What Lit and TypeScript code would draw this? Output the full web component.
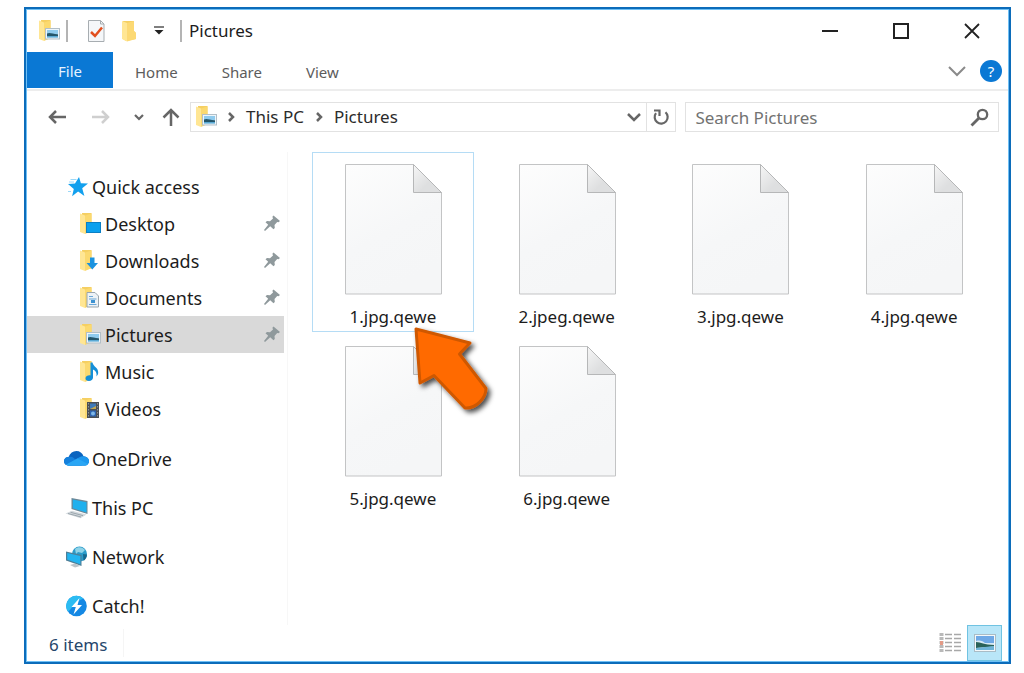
import { LitElement, html, css, svg, nothing } from "lit";
import { customElement, property, state } from "lit/decorators.js";
import { classMap } from "lit/directives/class-map.js";

const folderBase = svg`
  <path d="M3 1h9.500v18.500L5.500 21 3 19z" fill="#f5cf62"/>
  <path d="M1 1.500 6 3.500V22L1 20z" fill="#ffe694"/>
  <path d="M6 3.500 12.500 1.500V19L6 22z" fill="#fbd96f"/>`;

const picture = svg`
  <rect x="7.500" y="9.500" width="14" height="10.500" fill="#eef6fb" stroke="#b3bfc7"/>
  <rect x="9" y="11" width="11" height="4" fill="#8fcbee"/>
  <path d="M9 14.500c3-1.500 5 .5 11 .8v2H9z" fill="#24566b"/>
  <rect x="9" y="17" width="11" height="1.600" fill="#5aa9d4"/>`;

const icons: Record<string, unknown> = {
  desktop: svg`${folderBase}<rect x="7.500" y="10.500" width="14" height="10" fill="#0aa0ee" stroke="#0b7fc4"/>`,
  downloads: svg`${folderBase}<path d="M11 8.500h4.500V14H19l-5.700 6.500L7.500 14H11z" fill="#1b93e0"/>`,
  documents: svg`${folderBase}
    <path d="M8 6.500h8l3.500 3.500v11H8z" fill="#edf2f6" stroke="#9aa6ae"/>
    <path d="M10 10.500h4M10 13h7.500M10 18.500h7.500" stroke="#6aa8d8" stroke-width="1.200"/>
    <rect x="12" y="14" width="4" height="3" fill="#3d92d1"/>`,
  pictures: svg`${folderBase}${picture}`,
  music: svg`${folderBase}
    <path d="M11.500 2.500h2c.4 4 6.200 5 5.700 10.500-.2 1.700-1 2.700-1.800 3.500.8-3.500-.9-6-3.400-7v8c0 2-1.800 3.500-4 3.500s-3.500-1-3.500-2.700 2-3 4-3c.4 0 .7 0 1 .1z" fill="#148fd8"/>`,
  videos: svg`${folderBase}
    <rect x="8" y="5" width="12" height="16" fill="#4a4f55"/>
    <path d="M9.500 6v14M18.500 6v14" stroke="#8b9298" stroke-dasharray="1.500 1.500"/>
    <rect x="11" y="6.500" width="6" height="5.500" fill="#3e79b8"/>
    <path d="M11 12l6-3v3z" fill="#c4a64e"/>
    <rect x="11" y="13.500" width="6" height="6" fill="#2c63b0"/>
    <circle cx="14" cy="16.500" r="2" fill="#7db7e8"/>`,
  star: svg`<g transform="translate(1.500 0)">
    <path d="m13.500 2 1.900 6.300 7.100.2-5.800 4.700 2.200 7.800-6.300-4.400-6 4.700 1.700-7.200L2.500 9l7-.4z" fill="#12a0ee"/>
    <path d="M5 4.500h6M3.500 7h5M2.500 16.500h3" stroke="#9bd8f8"/></g>`,
  cloud: svg`
    <path d="M4.500 18.500C1.500 18.500 0 16.500 0 14.300 0 11.500 2.200 10 4.500 10 6 6 9 4 12.300 4c3.500 0 6.200 2 7.200 5.300 3 .3 5.500 2.200 5.500 5 0 2.500-2 4.200-4.500 4.200z" fill="#0b64bf"/>
    <path d="M4.500 10c2-.4 4 .2 5.500 1.200l8 7.300H4.500C1.500 18.500 0 16.500 0 14.300 0 11.500 2.200 10 4.500 10z" fill="#1580dc"/>
    <path d="M2 17.800 15 10.500c1.500-.8 3-1.300 4.500-1.200 3 .3 5.500 2.200 5.500 5 0 2.500-2 4.200-4.500 4.200h-16c-1 0-1.800-.2-2.500-.7z" fill="#1d98ee"/>
    <path d="M2 17.800 13.500 11.400 24 17c-.8 1-2 1.500-3.500 1.500h-16c-1 0-1.800-.2-2.500-.7z" fill="#2aa6f4"/>`,
  pc: svg`
    <path d="M7.500 2 23.500 5v13L7.500 13z" fill="#6d8796"/>
    <path d="M8.800 3.500 22.500 6.200v10.200L8.800 12.200z" fill="#1fb0ee"/>
    <path d="M1.500 17.500 8 14.800l14.500 3.700-6 3.800z" fill="#d3d9dd"/>
    <path d="m4 17.500 13 3.500M6.500 16.300 19 19.600" stroke="#9ba6ad"/>`,
  network: svg`
    <circle cx="15.500" cy="9" r="7.500" fill="#2b9bc9"/>
    <path d="M11 4c3-3 8-2 10 1l-3 3-4-1-2 2z" fill="#8fd3e8"/>
    <path d="m19 9 4 .5c0 3-1.500 5-3.500 6.500z" fill="#17688f"/>
    <path d="M2 6.500l15.500 3.500v11L2 15.500z" fill="#4e7f98"/>
    <path d="m3.200 8 13.200 3v8.300L3.200 14.500z" fill="#22b4f0"/>
    <path d="m6 20 5-1.500 5 2.500-5 1.500z" fill="#bcc4c9"/>`,
  bolt: svg`
    <circle cx="12.500" cy="12" r="10.300" fill="#1488e4"/>
    <path d="M12.500 1.700A10.300 10.300 0 0 0 4 17.800C8 15 10 8 19.500 4.500a10.300 10.300 0 0 0-7-2.800z" fill="#2cbcf2"/>
    <path d="M15.500 4 7.500 13h4.300L9.500 20.500 18 11h-4.500z" fill="#fff"/>`,
  folder: svg`<g transform="translate(3 0)">
    <path d="M4 2h11v10l2 2v6L7 22 4 20z" fill="#f5cf62"/>
    <path d="m3 2 5 2v18.500L3 20z" fill="#ffe694"/>
    <path d="m8 4 7-2v10l2 2v6l-9 2.500z" fill="#fcd974"/></g>`,
  check: svg`
    <path d="M4.500 1.500h12l3.500 3.500v17.500H4.500z" fill="#f5f7f9" stroke="#a7adb1"/>
    <path d="M16.500 1.500V5H20" fill="none" stroke="#a7adb1"/>
    <path d="m7 13 4 4 7-8.500" fill="none" stroke="#e2501f" stroke-width="2.500"/>`,
};

const icon = (name: string) =>
  html`<svg class="icon" viewBox="0 0 25 24" aria-hidden="true">${icons[name]}</svg>`;

const stroke = (d: string, size: number, width = 2) => html`<svg
  width=${size} height=${size} viewBox="0 0 ${size} ${size}" fill="none"
  stroke="currentColor" stroke-width=${width} aria-hidden="true"><path d=${d}></path></svg>`;

@customElement("file-tile")
class FileTile extends LitElement {
  @property() name = "";
  @property({ type: Boolean }) selected = false;

  static styles = css`
    :host { display: block; }
    .tile {
      display: flex; flex-direction: column; align-items: center; gap: 10px;
      width: 100%; height: 180px; padding: 11px 0 0; margin: 0;
      border: 1px solid transparent; background: none;
      font: 17px/24px "Noto Sans", "Open Sans", sans-serif; color: #1c1c1c;
    }
    .selected { border-color: #b5dcf5; }
    .sheet { display: block; width: 98px; height: 131px; flex: none; }
  `;

  render() {
    return html`<button class=${classMap({ tile: true, selected: this.selected })}>
      <svg class="sheet" viewBox="0 0 98 131" aria-hidden="true">
        <defs>
          <linearGradient id="paper" x1="0" y1="0" x2=".4" y2="1">
            <stop offset="0" stop-color="#fdfdfd"/><stop offset=".6" stop-color="#f6f7f8"/><stop offset="1" stop-color="#f5f6f7"/>
          </linearGradient>
          <linearGradient id="fold" x1="0" y1="0" x2="1" y2="1">
            <stop offset="0" stop-color="#f6f6f6"/><stop offset=".6" stop-color="#dedfe0"/>
          </linearGradient>
        </defs>
        <path d="M1.500.5h68L97.500 28.500V130H1.500z" fill="url(#paper)" stroke="#c3c4c5"/>
        <path d="M69.500.5 97.500 28.500h-28z" fill="url(#fold)" stroke="#b6b7b8"/>
      </svg>
      <span>${this.name}</span>
    </button>`;
  }
}

interface Place { label: string; icon: string; pinned?: boolean; child?: boolean }

const quickAccess: Place[] = [
  { label: "Quick access", icon: "star" },
  { label: "Desktop", icon: "desktop", child: true, pinned: true },
  { label: "Downloads", icon: "downloads", child: true, pinned: true },
  { label: "Documents", icon: "documents", child: true, pinned: true },
  { label: "Pictures", icon: "pictures", child: true, pinned: true },
  { label: "Music", icon: "music", child: true },
  { label: "Videos", icon: "videos", child: true },
];
const roots: Place[] = [
  { label: "OneDrive", icon: "cloud" },
  { label: "This PC", icon: "pc" },
  { label: "Network", icon: "network" },
  { label: "Catch!", icon: "bolt" },
];
const files = ["1.jpg.qewe", "2.jpeg.qewe", "3.jpg.qewe", "4.jpg.qewe", "5.jpg.qewe", "6.jpg.qewe"];

@customElement("app-root")
class AppRoot extends LitElement {
  @state() private place = "Pictures";

  static styles = css`
    :host {
      display: block; box-sizing: border-box; min-height: 100vh;
      padding: 7px 13px 9px 24px; background: #fff;
      font: 17px/24px "Noto Sans", "Open Sans", sans-serif; color: #1c1c1c;
    }
    * { box-sizing: border-box; }
    button, input { font: inherit; color: inherit; background: none; border: 0; padding: 0; margin: 0; }
    svg { display: block; flex: none; }
    .icon { width: 25px; height: 24px; }
    .window {
      display: flex; flex-direction: column; min-height: calc(100vh - 16px);
      border: 2px solid #0c6cba; box-shadow: inset 0 0 0 1px #6fc0f5; padding: 1px;
    }
    .titlebar { display: flex; align-items: center; height: 42px; padding: 0 1px 0 11px; }
    .rule { width: 2px; height: 22px; background: #b4b4b4; }
    .quick { display: flex; align-items: center; gap: 7px; margin: 0 10px 0 16px; }
    .quick:before { content: none; }
    .lead { margin-left: 3px; }
    .title { font-size: 17px; font-weight: 400; margin: 0 auto 0 7px; }
    .controls { display: flex; color: #222; }
    .controls button { display: grid; place-items: center; width: 71px; height: 42px; }
    .tabs { display: flex; align-items: stretch; height: 39px; padding-bottom: 1px; border-bottom: 2px solid #ededed; font-size: 15px; color: #5c5c5c; }
    .tab { padding: 4px 22px 0; }
    .file { width: 86px; padding: 2px 0 0; background: #0a78d4; color: #e6f3ff; }
    .tools { display: flex; align-items: center; gap: 13px; margin-left: auto; padding: 2px 6px 0 0; color: #8a8a8a; }
    .help { width: 22px; height: 22px; border-radius: 50%; background: #0a78d4; color: #fff; line-height: 22px; }
    .address { display: flex; align-items: center; gap: 9px; padding: 11px 9px 0 20px; color: #666; }
    .nav { display: flex; align-items: center; }
    .nav button { display: grid; place-items: center; height: 30px; }
    .wide { width: 20px; }
    .forward { width: 20px; margin: 0 22px 0 24px; color: #cfcfcf; }
    .recent { width: 14px; margin-right: 14px; }
    .fields { flex: 1; display: grid; grid-template-columns: 487fr 314fr; gap: 9px; }
    .box { display: flex; align-items: center; height: 30px; border: 1px solid #e2e2e2; min-width: 0; }
    .crumbs { display: flex; align-items: center; gap: 7px; flex: 1; padding: 0 4px; }
    .crumb { color: #2b2b2b; }
    .expand { margin-left: auto; }
    .refresh { display: grid; place-items: center; width: 29px; height: 28px; border-left: 1px solid #e2e2e2; }
    .search { padding: 0 9px; }
    .search input { flex: 1; min-width: 0; height: 28px; outline: 0; }
    .search input::placeholder { color: #727272; opacity: 1; }
    .main { flex: 1; display: flex; padding-top: 20px; }
    .side { flex: none; width: 261px; padding-top: 16px; border-right: 1px solid #f7f7f7; font-size: 18px; }
    .group { list-style: none; margin: 0; padding: 0 3px 0 0; }
    .roots { display: grid; gap: 12px; padding-top: 13px; }
    .place { display: flex; align-items: center; gap: 3px; height: 37px; padding: 0 3px 0 37px; color: inherit; text-decoration: none; }
    .child { padding-left: 52px; gap: 1px; }
    .current { background: #d9d9d9; }
    .pin { margin-left: auto; }
    .files {
      flex: 1; display: grid; align-content: start;
      grid-template-columns: repeat(auto-fill, minmax(160px, 1fr));
      gap: 2px 12px; padding: 0 13px 0 24px;
    }
    .cell { position: relative; }
    .pointer { position: absolute; left: 97px; top: 170px; z-index: 1; pointer-events: none; }
    .status { display: flex; align-items: center; height: 36px; padding: 0 6px 0 22px; color: #26466b; }
    .status span { padding: 4px 16px 0 0; border-right: 1px solid #f5f5f5; }
    .views { display: flex; margin-left: auto; }
    .views button { display: grid; place-items: center; width: 35px; height: 36px; }
    .views .on { background: #b9e6f8; border: 1px solid #70c3e2; }
  `;

  private renderPlace(p: Place) {
    const current = p.label === this.place;
    return html`<li><a href="#" aria-current=${current ? "page" : nothing}
      class=${classMap({ place: true, child: !!p.child, current })}
      @click=${(e: Event) => { e.preventDefault(); this.place = p.label; }}>
      ${icon(p.icon)}<span>${p.label}</span>
      ${p.pinned ? html`<svg class="pin" width="18" height="18" viewBox="0 0 18 18" aria-hidden="true">
        <path d="M10.500 .5 17 6l-1.500 1.200-1.300-.2-2.700 3 .3 3-1.300 1.300-3.300-3L2 16l-1-1 4.200-5.300-2.700-2.500L4 6l3 .2 3-2.700-.6-1.700z" fill="#8f999c"/>
      </svg>` : nothing}
    </a></li>`;
  }

  render() {
    return html`<div class="window">
      <header class="titlebar">
        ${icon("pictures")}
        <span class="rule lead"></span>
        <div class="quick">
          <button aria-label="Properties">${icon("check")}</button>
          <button aria-label="New folder">${icon("folder")}</button>
          <button aria-label="Customize Quick Access Toolbar">
            <svg width="22" height="12" viewBox="0 0 22 12" aria-hidden="true">
              <path d="M6 2h10" stroke="#555" stroke-width="1.500"/><path d="M6.500 5h9L11 9.500z" fill="#222"/>
            </svg>
          </button>
        </div>
        <span class="rule"></span>
        <h1 class="title">Pictures</h1>
        <div class="controls">
          <button aria-label="Minimize">${stroke("M1 9h16", 18)}</button>
          <button aria-label="Maximize">${stroke("M2 2h14v14H2z", 18)}</button>
          <button aria-label="Close">${stroke("M2 2l14 14M16 2 2 16", 18, 1.8)}</button>
        </div>
      </header>
      <div class="tabs">
        <button class="file">File</button>
        <button class="tab">Home</button>
        <button class="tab">Share</button>
        <button class="tab">View</button>
        <div class="tools">
          <button aria-label="Expand the Ribbon">${stroke("M2 6l8 8 8-8", 20)}</button>
          <button class="help" aria-label="Help">?</button>
        </div>
      </div>
      <div class="address">
        <nav class="nav" aria-label="History">
          <button class="wide" aria-label="Back">${stroke("M19 10H3M9 4l-6 6 6 6", 20, 2.5)}</button>
          <button class="forward" aria-label="Forward">${stroke("M1 10h16M11 4l6 6-6 6", 20, 2.5)}</button>
          <button class="recent" aria-label="Recent locations">${stroke("M2 5l4 4 4-4", 14, 2.2)}</button>
          <button class="wide" aria-label="Up">${stroke("M10 19V3M2.500 10.500 10 3l7.500 7.500", 20, 2.5)}</button>
        </nav>
        <div class="fields">
          <div class="box">
            <div class="crumbs">
              ${icon("pictures")}
              ${stroke("M2 2l4 4-4 4", 12, 2.5)}
              <button class="crumb">This PC</button>
              ${stroke("M6 4l4 4-4 4", 16, 2.5)}
              <button class="crumb">Pictures</button>
              <button class="expand" aria-label="Previous locations">${stroke("M2 5l6 6 6-6", 16, 2.5)}</button>
            </div>
            <button class="refresh" aria-label="Refresh">
              <svg width="18" height="18" viewBox="0 0 18 18" fill="none" stroke="currentColor" stroke-width="2.200" aria-hidden="true">
                <path d="M13.500 4.300A6.500 6.500 0 1 1 4 5.200M2 2.500h5.500V8"/>
              </svg>
            </button>
          </div>
          <div class="box search">
            <input type="search" aria-label="Search Pictures" placeholder="Search Pictures">
            <svg width="19" height="19" viewBox="0 0 19 19" fill="none" stroke="currentColor" stroke-width="2.300" aria-hidden="true">
              <circle cx="12.500" cy="6.500" r="4.700"/><path d="m9 10-7.500 7.500" stroke-width="2.800"/>
            </svg>
          </div>
        </div>
      </div>
      <div class="main">
        <nav class="side" aria-label="Places">
          <ul class="group">${quickAccess.map((p) => this.renderPlace(p))}</ul>
          <ul class="group roots">${roots.map((p) => this.renderPlace(p))}</ul>
        </nav>
        <div class="files">
          ${files.map((name, i) => html`<div class="cell">
            <file-tile .name=${name} .selected=${i === 0}></file-tile>
            ${i === 0 ? html`<svg class="pointer" width="90" height="96" viewBox="0 0 90 96" aria-hidden="true">
              <defs><filter id="shade" x="-20%" y="-20%" width="150%" height="150%">
                <feDropShadow dx="3" dy="3" stdDeviation="2.500" flood-color="#000" flood-opacity=".7"/>
              </filter></defs>
              <path d="M7 7 61 21 50.500 32 77 66.500C77 76 67 87 56 86L25 53.500 11 61z" fill="#ff6a00"
                stroke="#cf5800" stroke-width="3" stroke-linejoin="round" filter="url(#shade)"/>
            </svg>` : nothing}
          </div>`)}
        </div>
      </div>
      <footer class="status">
        <span>6 items</span>
        <div class="views">
          <button aria-label="Details view">
            <svg width="22" height="22" viewBox="0 0 22 22" aria-hidden="true">
              <path d="M2.500 1v20" stroke="#b9b9b9" stroke-width="4" stroke-dasharray="3 1"/>
              <path d="M2.500 9v4" stroke="#e39a86" stroke-width="3"/>
              <path d="M6 2.500h7M6 6.500h7M6 10.500h7M6 14.500h7M6 18.500h7M15 2.500h7M15 6.500h7M15 10.500h7M15 14.500h7M15 18.500h7" stroke="#a8a8a8" stroke-width="1.500"/>
            </svg>
          </button>
          <button class="on" aria-label="Large icons view">
            <svg width="22" height="18" viewBox="0 0 22 18" aria-hidden="true">
              <rect x=".5" y=".5" width="21" height="17" fill="#f4f8fa" stroke="#a9bcc6"/>
              <rect x="2" y="2" width="18" height="7" fill="#6fa9e6"/>
              <path d="M2 7c4-1 7 0 9 2h9v2H2z" fill="#d5e9f5"/>
              <path d="M2 8c5 0 8 3 18 3v1.500L2 14z" fill="#2a6258"/>
              <path d="M2 14 20 12v4H2z" fill="#6fb4d8"/>
            </svg>
          </button>
        </div>
      </footer>
    </div>`;
  }
}
